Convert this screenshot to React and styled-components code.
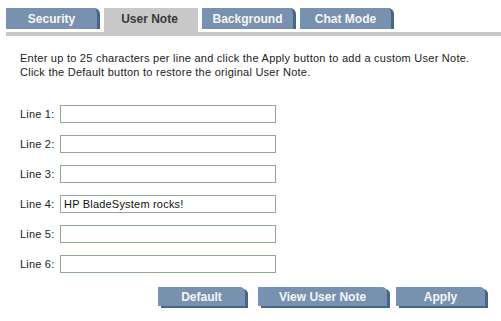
import React, { useState } from 'react';
import styled, { createGlobalStyle } from 'styled-components';

const GlobalStyle = createGlobalStyle`
  body {
    margin: 0;
    background: #fff;
    font-family: "Liberation Sans", Arial, sans-serif;
  }
`;

const Page = styled.div`
  padding: 8px 0 0 6px;
  width: 495px;
`;

const TabBar = styled.div`
  display: flex;
  align-items: flex-end;
  gap: 4px;
  border-bottom: 4px solid #c8c8c8;
`;

const Tab = styled.div`
  box-sizing: border-box;
  width: ${p => p.w}px;
  height: ${p => (p.active ? 24 : 21)}px;
  margin-bottom: ${p => (p.active ? 0 : 3)}px;
  padding-bottom: ${p => (p.active ? 3 : 0)}px;
  display: flex;
  align-items: center;
  justify-content: center;
  font-size: 12px;
  font-weight: bold;
  color: ${p => (p.active ? '#3a3a3a' : '#f4f6f9')};
  background: ${p => (p.active ? '#c8c8c8' : '#7891ae')};
  border-right: 3px solid ${p => (p.active ? '#c8c8c8' : '#44658c')};
  border-top-right-radius: ${p => (p.active ? 0 : 6)}px;
  cursor: pointer;
`;

const Body = styled.div`
  padding: 15px 0 0 14px;
`;

const Intro = styled.p`
  margin: 0 0 26px;
  font-size: 11px;
  line-height: 14px;
  letter-spacing: 0.25px;
  color: #222;
`;

const Rows = styled.div`
  display: flex;
  flex-direction: column;
  gap: 12px;
`;

const Row = styled.label`
  display: flex;
  align-items: center;
  font-size: 11px;
  letter-spacing: 0.2px;
  color: #222;
`;

const LabelText = styled.span`
  width: 40px;
`;

const TextInput = styled.input`
  box-sizing: border-box;
  width: 216px;
  height: 18px;
  margin: 0;
  padding: 0 3px;
  border: 1px solid #8ea88e;
  font-family: "Liberation Sans", Arial, sans-serif;
  font-size: 11px;
  letter-spacing: 0.2px;
  color: #111;
  outline: none;
`;

const Actions = styled.div`
  display: flex;
  justify-content: flex-end;
  margin-top: 14px;
  padding-right: 13px;
`;

const ActionButton = styled.button`
  box-sizing: border-box;
  width: ${p => p.w}px;
  height: 19px;
  margin: 0 ${p => p.after + 3}px 3px 0;
  padding: 0;
  border: none;
  border-top-right-radius: 5px;
  background: #7891ae;
  box-shadow: 3px 2px 0 #44658c;
  color: #f4f6f9;
  font-family: "Liberation Sans", Arial, sans-serif;
  font-size: 12px;
  font-weight: bold;
  cursor: pointer;
`;

const tabs = [
  { name: 'Security', w: 94 },
  { name: 'User Note', w: 94 },
  { name: 'Background', w: 94 },
  { name: 'Chat Mode', w: 94 },
];

export default function App() {
  const [active, setActive] = useState('User Note');
  const [lines, setLines] = useState(['', '', '', 'HP BladeSystem rocks!', '', '']);

  const update = (i, v) => {
    const next = [...lines];
    next[i] = v.slice(0, 25);
    setLines(next);
  };

  return (
    <>
      <GlobalStyle />
      <Page>
        <TabBar>
          {tabs.map(t => (
            <Tab key={t.name} w={t.w} active={active === t.name} onClick={() => setActive(t.name)}>
              {t.name}
            </Tab>
          ))}
        </TabBar>
        <Body>
          <Intro>
            Enter up to 25 characters per line and click the Apply button to add a custom User Note.
            <br />
            Click the Default button to restore the original User Note.
          </Intro>
          <Rows>
            {lines.map((val, i) => (
              <Row key={i}>
                <LabelText>Line {i + 1}:</LabelText>
                <TextInput value={val} maxLength={25} onChange={e => update(i, e.target.value)} />
              </Row>
            ))}
          </Rows>
        </Body>
        <Actions>
          <ActionButton w={87} after={10}>Default</ActionButton>
          <ActionButton w={129} after={6}>View User Note</ActionButton>
          <ActionButton w={89} after={0}>Apply</ActionButton>
        </Actions>
      </Page>
    </>
  );
}
